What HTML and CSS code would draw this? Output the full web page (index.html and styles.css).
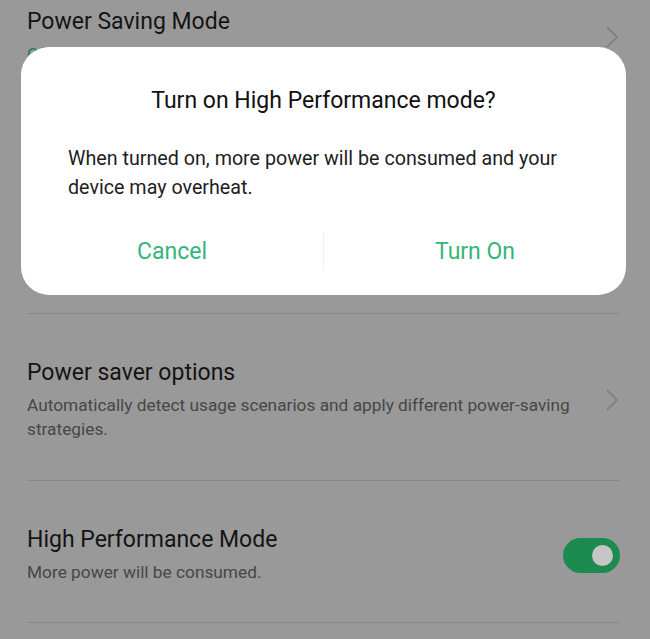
FILE: index.html
```html
<!DOCTYPE html>
<html lang="en">
<head>
  <meta charset="UTF-8" />
  <meta name="viewport" content="width=device-width, initial-scale=1.0"/>
  <title>Battery - High Performance Mode</title>
  <link rel="stylesheet" href="styles.css">
</head>
<body>
  <div class="list">
    <div class="item top">
      <div class="text">
        <div class="title">Power Saving Mode</div>
        <div class="sub green">Off</div>
      </div>
      <svg class="chevron" width="12" height="22" viewBox="0 0 12 22"><polyline points="1,1 11,11 1,21" fill="none" stroke="#7c7c7c" stroke-width="1.6"/></svg>
    </div>
    <div class="hidden-area"></div>
    <div class="divider"></div>

    <div class="item">
      <div class="text">
        <div class="title">Power saver options</div>
        <div class="sub">Automatically detect usage scenarios and apply different power-saving strategies.</div>
      </div>
      <svg class="chevron" width="12" height="22" viewBox="0 0 12 22"><polyline points="1,1 11,11 1,21" fill="none" stroke="#7c7c7c" stroke-width="1.6"/></svg>
    </div>
    <div class="divider"></div>

    <div class="item last">
      <div class="text">
        <div class="title">High Performance Mode</div>
        <div class="sub">More power will be consumed.</div>
      </div>
      <div class="toggle on"><span class="knob"></span></div>
    </div>
    <div class="divider"></div>
  </div>

  <div class="dialog">
    <div class="dialog-title">Turn on High Performance mode?</div>
    <div class="dialog-body">When turned on, more power will be consumed and your device may overheat.</div>
    <div class="dialog-actions">
      <button class="action">Cancel</button>
      <span class="sep"></span>
      <button class="action">Turn On</button>
    </div>
  </div>
</body>
</html>
```

FILE: styles.css
```css
body {
  margin: 0;
  background: #999999;
  font-family: 'Roboto', 'Liberation Sans', sans-serif;
  overflow: hidden;
  height: 639px;
}
.list {
  padding: 0 30px 0 27px;
}
.item {
  display: flex;
  align-items: center;
  padding: 45px 0 39px;
}
.item.top {
  padding: 8px 0 0;
}
.item.last {
  padding-bottom: 38px;
}
.text {
  flex: 1;
  padding-right: 30px;
}
.title {
  font-size: 23px;
  line-height: 28px;
  color: #141414;
}
.sub {
  margin-top: 6px;
  font-size: 17.3px;
  line-height: 24px;
  color: #474747;
}
.sub.green {
  color: #1f7a55;
}
.chevron {
  margin-right: 2px;
  flex-shrink: 0;
}
.hidden-area {
  height: 247px;
}
.divider {
  height: 1px;
  background: #888888;
}
.toggle {
  width: 57px;
  height: 35px;
  border-radius: 18px;
  background: #1d8a50;
  display: flex;
  align-items: center;
  justify-content: flex-end;
  padding-right: 7px;
  box-sizing: border-box;
  flex-shrink: 0;
}
.knob {
  width: 21px;
  height: 21px;
  border-radius: 50%;
  background: #c6c6c6;
}
.dialog {
  position: fixed;
  left: 21px;
  top: 47px;
  width: 605px;
  height: 248px;
  background: #ffffff;
  border-radius: 28px;
  padding-top: 40px;
  box-sizing: border-box;
}
.dialog-title {
  text-align: center;
  font-size: 23px;
  line-height: 28px;
  color: #111;
}
.dialog-body {
  margin-top: 29px;
  padding: 0 47px;
  font-size: 19.7px;
  line-height: 29px;
  color: #1e1e1e;
}
.dialog-actions {
  display: flex;
  align-items: center;
  margin-top: 21px;
  height: 56px;
}
.action {
  flex: 1;
  background: none;
  border: none;
  font-family: inherit;
  font-size: 23px;
  color: #33b679;
  padding: 0;
  height: 100%;
}
.sep {
  width: 1px;
  height: 36px;
  background: #efefef;
}
```
